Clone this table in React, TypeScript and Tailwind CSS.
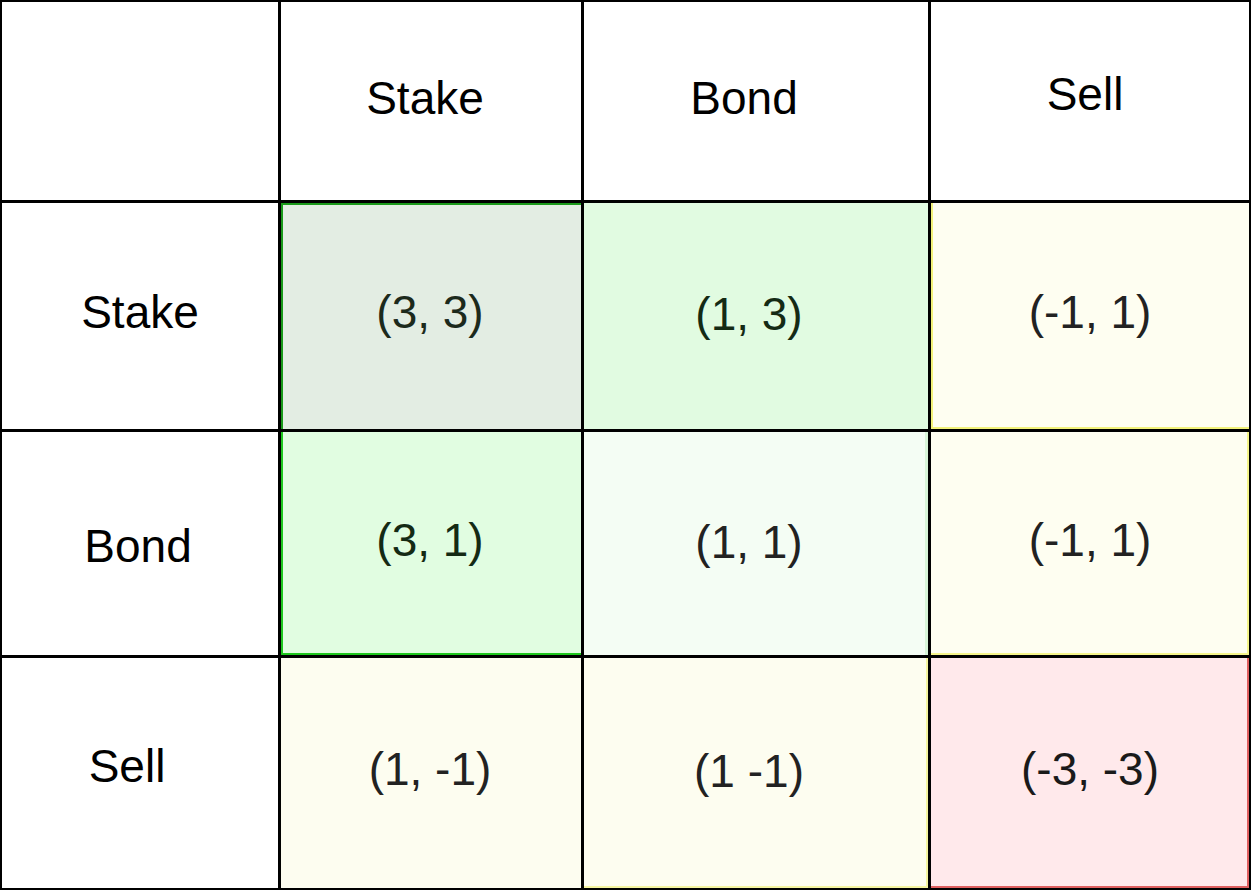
import React from "react";

type Cell = { text: string; bg: string; color?: string; inset?: string };

const header = ["Stake", "Bond", "Sell"];
const rows: { label: string; cells: Cell[] }[] = [
  {
    label: "Stake",
    cells: [
      { text: "(3, 3)", bg: "bg-[#e3ede3]", color: "text-[#1c2a1c]", inset: "shadow-[inset_2px_2px_0_0_#1a9a1a]" },
      { text: "(1, 3)", bg: "bg-[#e1fbe1]", color: "text-[#142a14]" },
      { text: "(-1, 1)", bg: "bg-[#fefef1]", color: "text-[#222222]", inset: "shadow-[inset_2px_0_0_0_#f2f27a,inset_0_-2px_0_0_#f2f27a]" },
    ],
  },
  {
    label: "Bond",
    cells: [
      { text: "(3, 1)", bg: "bg-[#e1fde1]", color: "text-[#142a14]", inset: "shadow-[inset_2px_0_0_0_#1ec81e,inset_0_-2px_0_0_#1ec81e]" },
      { text: "(1, 1)", bg: "bg-[#f4fdf4]", color: "text-[#222222]", inset: "shadow-[inset_-3px_0_0_0_#d8f5d8]" },
      { text: "(-1, 1)", bg: "bg-[#fefef1]", color: "text-[#222222]", inset: "shadow-[inset_-2px_0_0_0_#f5f58a,inset_0_-2px_0_0_#f5f58a]" },
    ],
  },
  {
    label: "Sell",
    cells: [
      { text: "(1, -1)", bg: "bg-[#fdfdf0]", color: "text-[#222222]" },
      { text: "(1 -1)", bg: "bg-[#fdfdf0]", color: "text-[#222222]", inset: "shadow-[inset_-2px_0_0_0_#f5f5a0,inset_0_-2px_0_0_#f5f5a0]" },
      { text: "(-3, -3)", bg: "bg-[#ffe9eb]", color: "text-[#1a1a1a]", inset: "shadow-[inset_-2px_0_0_0_#e06060,inset_0_-2px_0_0_#e06060]" },
    ],
  },
];

export default function App() {
  return (
    <div
      className="w-[1251px] h-[890px] bg-white border-2 border-black grid grid-cols-[279px_303px_347px_318px] grid-rows-[201px_229px_226px_230px] text-[46px] leading-none"
      style={{ fontFamily: '"Liberation Sans", Arial, Helvetica, sans-serif' }}
    >
      {/* header row */}
      <div className="border-r-[3px] border-b-[3px] border-black bg-white" />
      {header.map((h, i) => (
        <div
          key={h}
          className={`flex items-center justify-center pb-[6px] border-b-[3px] border-black bg-white text-black ${
            i < 2 ? "border-r-[3px]" : ""
          }`}
        >
          <span className={i === 0 ? "pr-[12px]" : i === 1 ? "pr-[24px]" : "pr-[10px] pb-[8px]"}>{h}</span>
        </div>
      ))}
      {rows.map((r, ri) => (
        <React.Fragment key={ri}>
          <div
            className={`flex items-center justify-center bg-white text-black border-r-[3px] border-black ${
              ri < 2 ? "border-b-[3px]" : ""
            }`}
          >
            <span className={ri === 2 ? "pr-[26px] pb-[14px]" : ri === 1 ? "pr-[4px] pt-[4px]" : "pb-[8px]"}>{r.label}</span>
          </div>
          {r.cells.map((c, ci) => (
            <div
              key={ci}
              className={`flex items-center justify-center border-black ${c.bg} ${c.color ?? ""} ${c.inset ?? ""} ${
                ci < 2 ? "border-r-[3px]" : ""
              } ${ri < 2 ? "border-b-[3px]" : ""}`}
            >
              <span className={ci === 0 ? "pr-[2px] pb-[8px]" : ci === 1 ? "pr-[14px] pb-[4px]" : "pb-[8px]"}>{c.text}</span>
            </div>
          ))}
        </React.Fragment>
      ))}
    </div>
  );
}
